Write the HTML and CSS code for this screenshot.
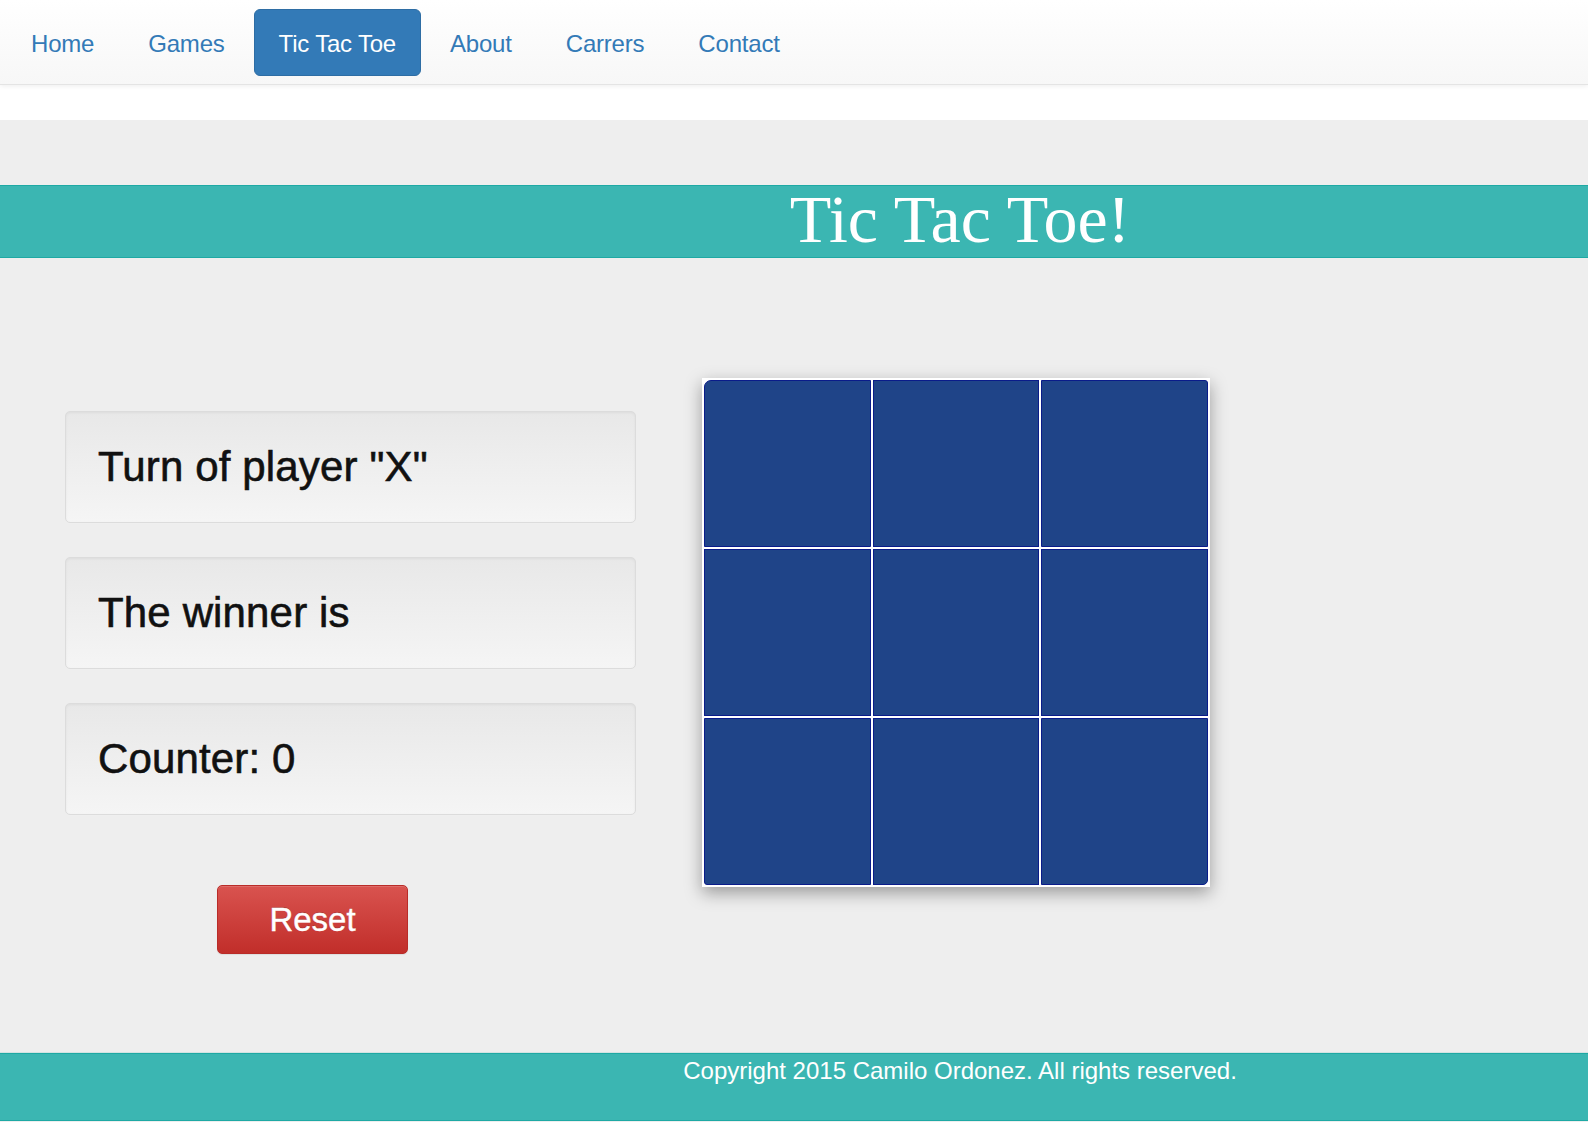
FILE: index.html
```html
<!DOCTYPE html>
<html lang="en">
<head>
<meta charset="utf-8">
<title>Tic Tac Toe</title>
<link rel="stylesheet" href="styles.css">
</head>
<body>
<nav class="navbar">
  <ul class="nav">
    <li><a class="nav-link" href="#">Home</a></li>
    <li><a class="nav-link" href="#">Games</a></li>
    <li><a class="nav-link active" href="#">Tic Tac Toe</a></li>
    <li><a class="nav-link" href="#">About</a></li>
    <li><a class="nav-link" href="#">Carrers</a></li>
    <li><a class="nav-link" href="#">Contact</a></li>
  </ul>
</nav>
<div class="spacer"></div>
<main class="main">
  <header class="title-band">
    <h1 class="title">Tic Tac Toe!</h1>
  </header>
  <section class="game">
    <div class="side">
      <div class="well">Turn of player "X"</div>
      <div class="well">The winner is</div>
      <div class="well">Counter: 0</div>
      <button class="btn-reset" type="button">Reset</button>
    </div>
    <div class="board">
      <div class="cell c-tl"></div>
      <div class="cell"></div>
      <div class="cell c-tr"></div>
      <div class="cell"></div>
      <div class="cell"></div>
      <div class="cell"></div>
      <div class="cell c-bl"></div>
      <div class="cell"></div>
      <div class="cell c-br"></div>
    </div>
  </section>
</main>
<footer class="footer">
  <p class="copy">Copyright 2015 Camilo Ordonez. All rights reserved.</p>
</footer>
</body>
</html>
```
FILE: styles.css
```css
* { box-sizing: border-box; }
html, body { margin: 0; padding: 0; }
body {
  background: #eeeeee;
  font-family: "Liberation Sans", Arial, sans-serif;
  color: #111;
}

.navbar {
  height: 85px;
  background: linear-gradient(to bottom, #ffffff 0%, #f7f7f7 100%);
  border-bottom: 1px solid #e4e4e4;
  box-shadow: 0 1px 5px rgba(0,0,0,0.075);
  position: relative;
  z-index: 1;
}
.nav {
  list-style: none;
  margin: 0;
  padding: 9px 0 0 6px;
  display: flex;
  gap: 4px;
}
.nav-link {
  display: block;
  height: 67px;
  line-height: 67px;
  padding: 0 24px;
  font-size: 24px;
  color: #337ab7;
  text-decoration: none;
  border-radius: 6px;
  border: 1px solid transparent;
  letter-spacing: -0.2px;
}
.nav-link.active {
  background: #337ab7;
  border-color: #2e6da4;
  color: #fff;
}

.spacer { height: 35px; background: #fff; }

.main { padding-top: 65px; }

.title-band {
  background: #3bb6b2;
  border-top: 1px solid #1ea9a4;
  border-bottom: 1px solid #1ea9a4;
  padding-left: 332px;
  padding-bottom: 5px;
}
.title {
  margin: 0;
  text-align: center;
  font-family: "Liberation Serif", "Times New Roman", serif;
  font-weight: normal;
  font-size: 68px;
  line-height: 66px;
  color: #fff;
}

.game {
  display: flex;
  align-items: flex-start;
  margin-top: 120px;
  padding-left: 65px;
  gap: 66px;
}
.side {
  width: 571px;
  padding-top: 33px;
  display: flex;
  flex-direction: column;
  gap: 34px;
}
.well {
  height: 112px;
  display: flex;
  align-items: center;
  padding-left: 32px;
  font-size: 42px;
  letter-spacing: 0.15px;
  -webkit-text-stroke: 0.6px #111;
  color: #111;
  background: linear-gradient(to bottom, #e8e8e8 0%, #f5f5f5 100%);
  border: 1px solid #dcdcdc;
  border-radius: 5px;
  box-shadow: inset 0 1px 3px rgba(0,0,0,0.05), 0 1px 0 rgba(255,255,255,0.1);
}
.btn-reset {
  align-self: flex-start;
  margin-left: 152px;
  margin-top: 36px;
  width: 191px;
  height: 69px;
  font-family: "Liberation Sans", Arial, sans-serif;
  font-size: 33px;
  -webkit-text-stroke: 0.4px #fff;
  color: #fff;
  background: linear-gradient(to bottom, #d9534f 0%, #c12e2a 100%);
  border: 1px solid #b92c28;
  border-radius: 5px;
  text-shadow: 0 -1px 0 rgba(0,0,0,0.2);
  box-shadow: inset 0 1px 0 rgba(255,255,255,0.15), 0 1px 1px rgba(0,0,0,0.075);
  padding: 0;
}

.board {
  width: 508px;
  height: 509px;
  background: #fff;
  padding: 2px;
  display: grid;
  grid-template-columns: repeat(3, 1fr);
  grid-template-rows: repeat(3, 1fr);
  gap: 2px;
  box-shadow: 0 6px 16px rgba(0,0,0,0.35);
}
.cell {
  background: #1f4488;
  border: 1px solid #0a1c8a;
}
.c-tl { border-top-left-radius: 7px; }
.c-tr { border-top-right-radius: 3px; }
.c-bl { border-bottom-left-radius: 3px; }
.c-br { border-bottom-right-radius: 5px; }

.footer {
  margin-top: 99px;
  height: 68px;
  background: #3bb6b2;
  border-top: 1px solid #1ea9a4;
  border-bottom: 1px solid #1ea9a4;
  box-shadow: 0 -1px 0 #d3e3e2;
  padding-left: 332px;
}
.copy {
  margin: 0;
  text-align: center;
  color: #fff;
  font-size: 24px;
  line-height: 33px;
}
```
